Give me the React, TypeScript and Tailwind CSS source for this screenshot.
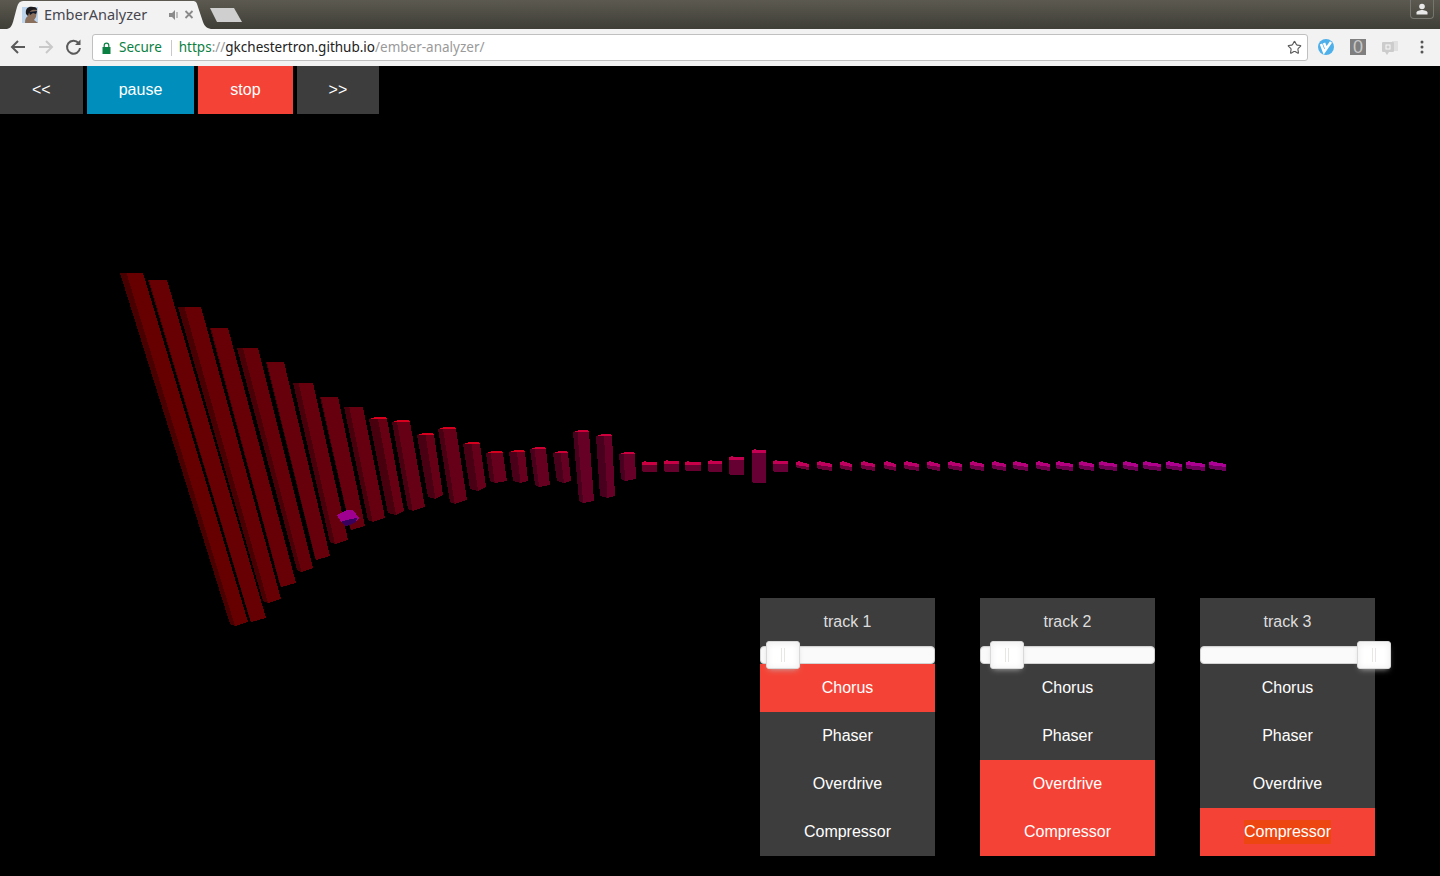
import { Star } from 'lucide-react';

// xl top, xr top, y top, xl bottom, xr bottom, y bottom
const bars: number[][] = [
  [120, 143, 273, 230, 248, 626], [148, 167, 280, 250, 266, 622], [178, 201, 307, 263, 281, 603],
  [210, 228, 328, 280, 296, 587], [237, 258, 348, 297, 313, 572], [266, 284, 362, 315, 330, 560],
  [293, 313, 383, 330, 348, 544], [320, 338, 397, 350, 365, 530], [344, 363, 407, 368, 385, 522],
  [369, 387, 417, 388, 404, 515], [392, 410, 420, 408, 425, 511], [417, 434, 433, 428, 443, 499],
  [438, 456, 427, 450, 467, 504], [463, 480, 442, 470, 486, 491], [486, 503, 451, 490, 507, 483],
  [509, 525, 450, 513, 528, 483], [530, 546, 447, 535, 550, 487], [553, 568, 451, 557, 571, 483],
  [573, 589, 430, 579, 594, 503], [596, 612, 434, 600, 615, 498], [619, 635, 452, 621, 636, 481],
  [642, 657, 461, 643, 657, 472], [664, 679, 460, 664, 679, 472], [685, 701, 461, 685, 701, 471],
  [708, 722, 460, 708, 722, 472], [729, 744, 456, 729, 744, 475], [752, 766, 449, 752, 766, 483],
  [773, 788, 460, 773, 788, 472], [796, 809, 461, 796, 809, 470], [817, 832, 461, 817, 832, 471],
  [840, 852, 461, 840, 852, 471], [861, 875, 461, 861, 875, 471], [884, 896, 461, 884, 896, 471],
  [904, 919, 461, 904, 919, 471], [927, 940, 461, 927, 940, 471], [948, 962, 461, 948, 962, 471],
  [970, 984, 461, 970, 984, 471], [992, 1006, 461, 992, 1006, 471], [1013, 1028, 461, 1013, 1028, 471],
  [1036, 1050, 461, 1036, 1050, 471], [1056, 1073, 461, 1056, 1073, 471], [1079, 1094, 461, 1079, 1094, 471],
  [1099, 1117, 461, 1099, 1117, 471], [1123, 1138, 461, 1123, 1138, 471], [1143, 1161, 461, 1143, 1161, 471],
  [1166, 1182, 461, 1166, 1182, 471], [1186, 1205, 461, 1186, 1205, 471], [1209, 1226, 461, 1209, 1226, 471],
];

function Bars() {
  return (
    <svg width="1440" height="810" viewBox="0 66 1440 810" shapeRendering="crispEdges" className="absolute left-0 top-0">
      {bars.map(([xl, xr, yt, bl, br, yb], i) => {
        const t = i / 47;
        const b = Math.round(t * 94);
        const r = i < 28 ? 102 : 110;
        const face = `rgb(${r},0,${b})`;
        const dark = `rgb(${Math.round(r * 0.72)},0,${Math.round(b * 0.8)})`;
        const top = `rgb(${Math.round(228 - t * 56)},0,${Math.round(t * 60 < 20 ? 30 : t * 150)})`;
        if (i >= 21) {
          // short boxes: bright flat cap over a darker body, tilted a little further right
          const tilt = i >= 28 ? 2 : 0;
          return (
            <g key={i}>
              <polygon points={`${xl},${yt + 3} ${xr},${yt + 3 + tilt} ${br},${yb} ${xl + 2},${yb - tilt} ${xl},${yb - tilt - 1}`} fill={face} />
              <polygon points={`${xl},${yt + 1} ${xl + 3},${yt} ${xl + 5},${yt + 1} ${xr},${yt + 1 + tilt} ${xr},${yt + 4 + tilt} ${xl},${yt + 4}`} fill={top} />
            </g>
          );
        }
        const f = i % 2 === 0 ? 0.28 : i > 8 ? 0.5 : 0.06;
        const capH = i < 9 ? 1 : 3;
        const sx = xl + (xr - xl) * f;
        const sbx = bl + (br - bl) * f;
        const rise = i < 14 ? 4 : 2;
        return (
          <g key={i}>
            <polygon points={`${xl},${yt + capH - 1} ${sx},${yt + capH - 1} ${sbx},${yb} ${bl},${yb - 2}`} fill={dark} />
            <polygon points={`${sx},${yt + capH - 1} ${xr},${yt + capH - 1} ${br},${yb - rise} ${sbx},${yb}`} fill={face} />
            <polygon points={`${xl},${yt + capH - 1} ${xl + (xr - xl) * 0.4},${yt} ${xr - 1},${yt} ${xr},${yt + capH - 1}`} fill={top} />
          </g>
        );
      })}
      <polygon points="337,515 347,510 353,510 359,518 356,522 345,524 341,522" fill="#a0008f" />
      <polygon points="345,526 341,522 346,520 357,518 356,522 350,525" fill="#3a0060" />
    </svg>
  );
}

function Button({ label, color }: { label: string; color: string }) {
  return <button className={`h-12 px-8 text-white text-base ${color}`}>{label}</button>;
}

function Track({ name, handle, on }: { name: string; handle: string; on: string[] }) {
  const effects = ['Chorus', 'Phaser', 'Overdrive', 'Compressor'];
  return (
    <div className="w-[175px] bg-[#3d3d3d] text-white text-center">
      <div className="h-12 flex items-center justify-center text-[#dddddd]">{name}</div>
      <div className="relative h-[18px] bg-[#fafafa] border border-[#d3d3d3] rounded shadow-[inset_0_1px_1px_#f0f0f0]">
        <div className={`absolute top-[-6px] w-[34px] h-7 bg-white border border-[#d9d9d9] rounded-[3px] shadow-[inset_0_0_1px_#fff,inset_0_1px_7px_#ebebeb,0_3px_6px_-3px_#bbb] ${handle}`}>
          <div className="absolute left-3.5 top-1.5 h-3.5 w-px bg-[#e8e7e6]" />
          <div className="absolute left-[17px] top-1.5 h-3.5 w-px bg-[#e8e7e6]" />
        </div>
      </div>
      {effects.map(e => (
        <div key={e} className={`h-12 flex items-center justify-center ${on.includes(e) ? 'bg-[#f44336]' : ''}`}>
          {name === 'track 3' && e === 'Compressor' ? <span className="bg-[#ee4611]">{e}</span> : e}
        </div>
      ))}
    </div>
  );
}

function ChromeBar() {
  return (
    <div className="shrink-0 font-['Noto_Sans',sans-serif]">
      <div className="relative h-[29px] bg-gradient-to-b from-[#5c5a50] to-[#3f3e37]">
        <svg width="250" height="29" className="absolute left-0 top-0">
          <path d="M7 29 C11 28 12 25 13 22 L17 7 C18 3 20 1 23 1 L193 1 C196 1 197 3 198 7 L203 22 C204 25 206 28 211 29 Z" fill="#f2f2f2" />
          <path d="M210 8 H234 L242 22 H217 Z" fill="#cfcfcf" />
          {/* favicon: face with dark glasses on a pale sky */}
          <rect x="22" y="7" width="16" height="16" fill="#bcd4ec" />
          <path d="M25 23 C25 19 26 17 28 16 L27 12 C27 8 30 7 33 7 C36 7 37 9 37 11 L36 17 L34 20 L38 23 Z" fill="#8a6f5c" />
          <path d="M26 14 C25 8 29 6 33 7 C36 7 37 8 37 10 C33 9 29 10 28 16 Z" fill="#1c1a1c" />
          <path d="M29 12 L37 11 L36 14 L33 13 L30 15 Z" fill="#101828" />
          <path d="M169 13 H172 L175 10 V20 L172 17 H169 Z" fill="#8a8a8a" />
          <path d="M177 12 V18" stroke="#8a8a8a" strokeWidth="1" />
          <path d="M185.500 11 L192.500 18 M192.500 11 L185.500 18" stroke="#8a8a8a" strokeWidth="1.800" />
        </svg>
        <span className="absolute left-11 top-1 text-[14.500px] leading-5 text-[#46464f]">EmberAnalyzer</span>
        <div className="absolute right-[6px] top-0 w-[24px] h-[19px] rounded-b border border-t-0 border-[#77766e] flex items-center justify-center">
          <svg width="14" height="14" viewBox="0 0 14 14">
            <circle cx="7" cy="4.500" r="2.800" fill="#e8e8e8" />
            <path d="M1.500 12.500 V10.500 C1.500 9 5 8 7 8 C9 8 12.500 9 12.500 10.500 V12.500 Z" fill="#e8e8e8" />
          </svg>
        </div>
      </div>
      <div className="h-[37px] bg-[#f2f2f2] flex items-center">
        <svg width="92" height="37" className="shrink-0">
          <path d="M25 18 H12 M18 12 L12 18 L18 24" stroke="#5a5a5a" strokeWidth="2" fill="none" />
          <path d="M39 18 H52 M46 12 L52 18 L46 24" stroke="#c9c9c9" strokeWidth="2" fill="none" />
          <path d="M78.500 14 A6.500 6.500 0 1 0 80 19" stroke="#5a5a5a" strokeWidth="2" fill="none" />
          <path d="M80.500 10.500 V16 H75 Z" fill="#5a5a5a" />
        </svg>
        <div className="w-[1216px] h-[27px] bg-white border border-[#c0c0c0] rounded-[3px] flex items-center text-[13.500px] leading-none">
          <svg width="9" height="12" viewBox="0 0 9 12" className="ml-[9px] shrink-0">
            <rect x="0.500" y="5" width="8" height="7" fill="#0b8043" />
            <path d="M2.200 5 V3.500 A2.300 2.300 0 0 1 6.800 3.500 V5" stroke="#0b8043" strokeWidth="1.200" fill="none" />
          </svg>
          <span className="ml-2 text-[#0b8043]">Secure</span>
          <span className="ml-[9px] mr-[7px] w-px h-4 bg-[#c9c9c9]" />
          <span className="text-[#0b8043]">https</span>
          <span className="text-[#9a9a9a]">://</span>
          <span className="text-[#222222]">gkchestertron.github.io</span>
          <span className="text-[#9a9a9a]">/ember-analyzer/</span>
          <Star size={15} strokeWidth={1.800} className="ml-auto mr-[5px] text-[#5a5a5a]" />
        </div>
        <svg width="132" height="37" className="shrink-0">
          <circle cx="18" cy="18" r="8" fill="#4eb0ea" />
          <path d="M13 15 L16 23 L23 13 M16 14 L18 19" stroke="#ffffff" strokeWidth="2.500" fill="none" />
          <rect x="42" y="10" width="16" height="16" fill="#7f7f7f" />
          <text x="50" y="24" textAnchor="middle" fontSize="18" fontFamily="Liberation Sans, sans-serif" fill="#c8c8c8">0</text>
          <rect x="84" y="12" width="6" height="10" fill="#e0e0e0" />
          <rect x="74" y="13" width="12" height="10" rx="1" fill="#cccccc" />
          <path d="M77 23 H81 L79 26 Z" fill="#cccccc" />
          <rect x="78" y="16" width="4" height="4" fill="none" stroke="#f7f7f7" />
          <circle cx="114" cy="13" r="1.500" fill="#555555" />
          <circle cx="114" cy="18" r="1.500" fill="#555555" />
          <circle cx="114" cy="23" r="1.500" fill="#555555" />
        </svg>
      </div>
    </div>
  );
}

export default function App() {
  return (
    <div className="h-[876px] overflow-hidden flex flex-col bg-black font-['Liberation_Sans',sans-serif]">
      <ChromeBar />
      <div className="relative flex-1">
        <Bars />
        <div className="relative flex gap-1">
          <Button label="<<" color="bg-[#3d3d3d]" />
          <Button label="pause" color="bg-[#008fbc]" />
          <Button label="stop" color="bg-[#f44336]" />
          <Button label=">>" color="bg-[#3d3d3d]" />
        </div>
        <div className="absolute right-[65px] bottom-5 flex gap-[45px]">
          <Track name="track 1" handle="left-[5px]" on={['Chorus']} />
          <Track name="track 2" handle="left-[9px]" on={['Overdrive', 'Compressor']} />
          <Track name="track 3" handle="right-[-17px]" on={['Compressor']} />
        </div>
      </div>
    </div>
  );
}
